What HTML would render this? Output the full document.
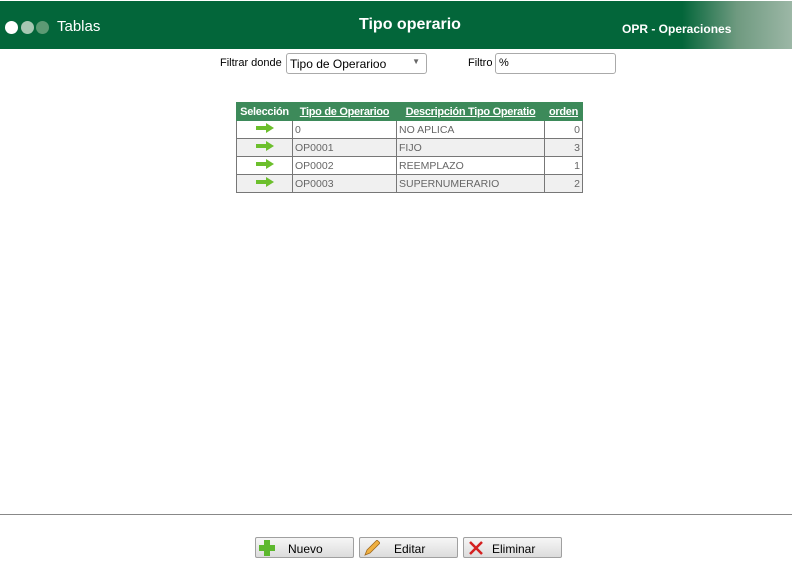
<!DOCTYPE html>
<html><head><meta charset="utf-8"><style>
*{margin:0;padding:0;box-sizing:border-box}
body{width:792px;height:583px;background:#fff;font-family:"Liberation Sans",sans-serif;position:relative;overflow:hidden}
.hdr{position:absolute;left:0;top:1px;width:792px;height:48px;background:#03663a}
.dot{position:absolute;top:20px;width:13px;height:13px;border-radius:50%}
.t{position:absolute;color:#fff}
.lbl{position:absolute;font-size:11px;color:#000}
.box{position:absolute;border:1px solid #aaa;border-radius:3px;background:#fff;font-size:12px;padding:3px 3px}
table{position:absolute;left:236px;top:102px;width:346px;border-collapse:collapse;table-layout:fixed;font-family:"Liberation Sans",sans-serif;font-size:10.5px}
td,th{height:18px;border:1px solid #777;padding:0 2px;white-space:nowrap;overflow:hidden;color:#666}
th{background:#3d8a5a;color:#fff;font-weight:bold;text-decoration:underline;border-color:#3d8a5a;font-size:11px;letter-spacing:-.3px;padding:0 1px}
th:first-child{text-decoration:none}
tr.a td{background:#f0f0f0}
.btn{position:absolute;top:537px;width:99px;height:21px;border:1px solid #a0a0a0;border-radius:2px;background:linear-gradient(#f6f6f6,#dcdcdc);font-size:12px;color:#000}
.btn span{position:absolute;top:4px}
</style></head><body>
<div class="hdr">
<div class="dot" style="left:5px;background:#fff"></div>
<div class="dot" style="left:21px;background:#a7c7b3"></div>
<div class="dot" style="left:36px;background:#5c9a74"></div>
<div class="t" style="left:57px;top:17px;font-size:15px">Tablas</div>
<div class="t" style="left:359px;top:15px;font-size:16px;font-weight:bold">Tipo operario</div>
<div style="position:absolute;right:0;top:0;width:110px;height:48px;background:linear-gradient(90deg,#03663a,#6f9a80 50%,#9cb7a6)"></div>
<div class="t" style="left:622px;top:21px;font-size:12px;font-weight:bold">OPR - Operaciones</div>
</div>
<div class="lbl" style="left:220px;top:57px">Filtrar donde</div>
<div class="box" style="left:286px;top:53px;width:141px;height:21px">Tipo de Operarioo<span style="position:absolute;right:6px;top:3px;font-size:8px;color:#666">▼</span></div>
<div class="lbl" style="left:468px;top:57px">Filtro</div>
<div class="box" style="left:495px;top:53px;width:121px;height:21px;font-size:11px">%</div>
<table>
<colgroup><col style="width:56px"><col style="width:104px"><col style="width:148px"><col style="width:38px"></colgroup>
<tr><th>Selección</th><th>Tipo de Operarioo</th><th>Descripción Tipo Operatio</th><th>orden</th></tr>
<tr><td style="text-align:center"><svg width="18" height="10"><path d="M0 3h10V0l8 5-8 5V7H0z" fill="#6cbf2c"/></svg></td><td>0</td><td>NO APLICA</td><td style="text-align:right">0</td></tr>
<tr class="a"><td style="text-align:center"><svg width="18" height="10"><path d="M0 3h10V0l8 5-8 5V7H0z" fill="#6cbf2c"/></svg></td><td>OP0001</td><td>FIJO</td><td style="text-align:right">3</td></tr>
<tr><td style="text-align:center"><svg width="18" height="10"><path d="M0 3h10V0l8 5-8 5V7H0z" fill="#6cbf2c"/></svg></td><td>OP0002</td><td>REEMPLAZO</td><td style="text-align:right">1</td></tr>
<tr class="a"><td style="text-align:center"><svg width="18" height="10"><path d="M0 3h10V0l8 5-8 5V7H0z" fill="#6cbf2c"/></svg></td><td>OP0003</td><td>SUPERNUMERARIO</td><td style="text-align:right">2</td></tr>
</table>
<div style="position:absolute;left:0;top:514px;width:792px;height:1px;background:#888"></div>
<div class="btn" style="left:255px"><svg style="position:absolute;left:3px;top:2px" width="16" height="16"><path d="M5 0h6v5h5v6h-5v5H5v-5H0V5h5z" fill="#5db82e"/></svg><span style="left:32px">Nuevo</span></div>
<div class="btn" style="left:359px"><svg style="position:absolute;left:4px;top:2px" width="16" height="16"><path d="M1 15l2-5L13 0l3 3L6 13z" fill="#f0b040" stroke="#a06a20" stroke-width=".8"/></svg><span style="left:34px">Editar</span></div>
<div class="btn" style="left:463px"><svg style="position:absolute;left:5px;top:3px" width="14" height="14"><path d="M1 1L13 13M13 1L1 13" stroke="#d42020" stroke-width="2.5"/></svg><span style="left:28px">Eliminar</span></div>
</body></html>
